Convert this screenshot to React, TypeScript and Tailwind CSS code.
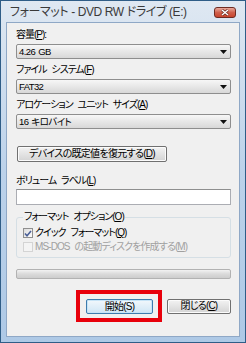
const font =
  "font-['Liberation_Sans','Noto_Sans_CJK_JP',sans-serif] [font-feature-settings:'palt']";

function Label({ children }: { children: React.ReactNode }) {
  return (
    <div className="h-[14px] text-[10px] leading-[14px] tracking-[-1px] [word-spacing:3px] text-black">
      {children}
    </div>
  );
}

function Select({ value }: { value: string }) {
  return (
    <div className="mt-[2px] flex h-[15px] items-center justify-between rounded-[2px] border border-[#8e8e8e] bg-gradient-to-b from-[#f7f7f7] to-[#d8d8d8] pl-[2px] pr-[3px]">
      <span className="text-[9.5px] leading-none tracking-[-0.6px] [word-spacing:1px] text-black">
        {value}
      </span>
      <svg width="7" height="4" viewBox="0 0 7 4">
        <path d="M0 0h7L3.5 4z" fill="#111" />
      </svg>
    </div>
  );
}

function Button({ children, primary }: { children: React.ReactNode; primary?: boolean }) {
  return (
    <div
      className={
        primary
          ? "flex h-[15px] w-[67px] items-center justify-center rounded-[2px] border border-[#3d7bad] bg-gradient-to-b from-[#f2f8fc] to-[#cfe6f5] text-[10px] leading-none tracking-[-0.8px] text-black shadow-[inset_0_0_0_1px_#c6e4f7]"
          : "flex h-[15px] w-[64px] items-center justify-center rounded-[2px] border border-[#707070] bg-gradient-to-b from-[#f3f3f3] to-[#d4d4d4] text-[10px] leading-none tracking-[-0.8px] text-black shadow-[inset_0_0_0_1px_#fbfbfb]"
      }
    >
      {children}
    </div>
  );
}

export default function App() {
  return (
    <div className={`h-[343px] w-[246px] bg-[#2f5d87] p-px ${font}`}>
      <div className="flex h-full flex-col bg-gradient-to-b from-[#dfe8f2] via-[#bcd2ea] to-[#aec9e6]">
        {/* タイトルバー */}
        <div className="flex h-[21px] items-center justify-between pl-[9px] pr-[9px]">
          <span className="text-[12px] leading-none tracking-[-0.4px] text-[#3a3a3a]">
            フォーマット - DVD RW ドライブ (E:)
          </span>
          <div className="mt-[2px] flex h-[11px] w-[22px] items-center justify-center rounded-[3px] border border-[#6e2b22] bg-gradient-to-b from-[#e8a99c] via-[#d0604c] to-[#c8442c]">
            <svg width="8" height="7" viewBox="0 0 8 7">
              <path d="M1 1l6 5M7 1L1 6" stroke="#5a1e16" strokeWidth="2.6" />
              <path d="M1 1l6 5M7 1L1 6" stroke="#fff" strokeWidth="1.5" />
            </svg>
          </div>
        </div>

        {/* 本体 */}
        <div className="mx-[5px] mb-[5px] flex flex-1 flex-col border border-[#8fa8c6] bg-[#f0f0f0] pl-[9px] pr-[8px] pt-[5px]">
          <Label>
            容量(<u>P</u>):
          </Label>
          <Select value="4.26 GB" />

          <div className="mt-[4px]">
            <Label>
              ファイル システム(<u>F</u>)
            </Label>
          </div>
          <Select value="FAT32" />

          <div className="mt-[4px]">
            <Label>
              アロケーション ユニット サイズ(<u>A</u>)
            </Label>
          </div>
          <Select value="16 キロバイト" />

          <div className="ml-[1px] mt-[17px] flex h-[16px] w-[150px] items-center justify-center rounded-[2px] border border-[#707070] bg-gradient-to-b from-[#f3f3f3] to-[#d4d4d4] text-[10px] leading-none tracking-[-0.7px] text-black shadow-[inset_0_0_0_1px_#fbfbfb]">
            デバイスの既定値を復元する(<u>D</u>)
          </div>

          <div className="mt-[12px]">
            <Label>
              ボリューム ラベル(<u>L</u>)
            </Label>
          </div>
          <div className="mt-[1px] h-[16px] border border-[#abadb3] border-t-[#8e8f8f] bg-white" />

          <fieldset className="mt-[5px] rounded-[3px] border border-[#d5dfe5] pb-[3px] pl-[6px] pr-[6px]">
            <legend className="px-[1px] text-[10px] leading-[14px] tracking-[-1px] [word-spacing:3px] text-black">
              フォーマット オプション(<u>O</u>)
            </legend>
            <div className="mt-[2px] flex h-[14px] items-center gap-[2px]">
              <div className="flex h-[10px] w-[10px] items-center justify-center border border-[#8f8f8f] bg-gradient-to-br from-[#dcdcdc] to-[#fdfdfd]">
                <svg width="8" height="7" viewBox="0 0 8 7">
                  <path d="M1 3.5l2 2.2L7 1" fill="none" stroke="#4a5f97" strokeWidth="1.6" />
                </svg>
              </div>
              <span className="text-[10px] leading-none tracking-[-1px] [word-spacing:3px] text-black">
                クイック フォーマット(<u>Q</u>)
              </span>
            </div>
            <div className="flex h-[14px] items-center gap-[2px]">
              <div className="h-[10px] w-[10px] border border-[#d4d4d4] bg-[#f4f4f4]" />
              <span className="text-[10px] leading-none tracking-[-0.9px] [word-spacing:3px] text-[#a0a0a0]">
                MS-DOS の起動ディスクを作成する(<u>M</u>)
              </span>
            </div>
          </fieldset>

          <div className="mt-[11px] h-[10px] rounded-[2px] border border-[#b2b2b2] bg-gradient-to-b from-[#f2f2f2] via-[#dadada] to-[#cdcdcd]" />

          <div className="mt-[11px] flex items-center justify-end">
            <div className="border-[4px] border-[#e8000b] pb-[4px] pl-[6px] pr-[5px] pt-[5px]">
              <Button primary>開始(S)</Button>
            </div>
            <div className="ml-[5px]">
              <Button>
                閉じる(<u>C</u>)
              </Button>
            </div>
          </div>
        </div>
      </div>
    </div>
  );
}
